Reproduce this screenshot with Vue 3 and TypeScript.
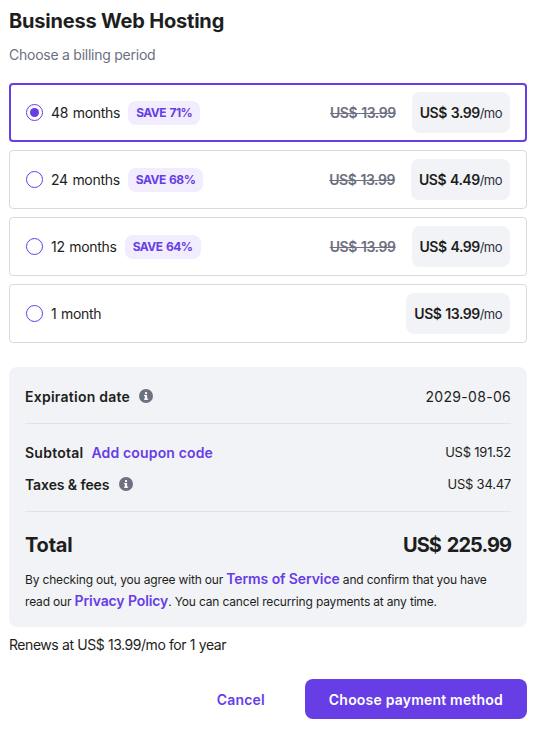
<script setup lang="ts">
interface Plan {
  label: string
  save?: string
  old?: string
  price: string
  selected?: boolean
}
const plans: Plan[] = [
  { label: '48 months', save: 'SAVE 71%', old: 'US$ 13.99', price: 'US$ 3.99', selected: true },
  { label: '24 months', save: 'SAVE 68%', old: 'US$ 13.99', price: 'US$ 4.49' },
  { label: '12 months', save: 'SAVE 64%', old: 'US$ 13.99', price: 'US$ 4.99' },
  { label: '1 month', price: 'US$ 13.99' },
]
</script>

<template>
  <div class="page">
    <h1 class="title">Business Web Hosting</h1>
    <p class="sub">Choose a billing period</p>

    <div class="plans">
      <div v-for="p in plans" :key="p.label" class="plan" :class="{ selected: p.selected }">
        <span class="radio"><span v-if="p.selected" class="dot"></span></span>
        <span class="label">{{ p.label }}</span>
        <span v-if="p.save" class="save">{{ p.save }}</span>
        <span class="spacer"></span>
        <span v-if="p.old" class="old">{{ p.old }}</span>
        <span class="price"><b>{{ p.price }}</b><span class="mo">/mo</span></span>
      </div>
    </div>

    <section class="summary">
      <div class="row first">
        <span class="strong">Expiration date
          <svg class="info" viewBox="0 0 14 14"><circle cx="7" cy="7" r="7" fill="#6d7081"/><rect x="5.9" y="6" width="2.2" height="4.6" fill="#fff"/><rect x="5" y="6" width="3" height="1.2" fill="#fff"/><rect x="5" y="9.6" width="4.2" height="1.2" fill="#fff"/><circle cx="7" cy="4.1" r="1.2" fill="#fff"/></svg>
        </span>
        <span class="date">2029-08-06</span>
      </div>
      <hr class="rule" />
      <div class="row sub-row">
        <span class="strong">Subtotal<a class="coupon">Add coupon code</a></span>
        <span class="amount">US$ 191.52</span>
      </div>
      <div class="row tax-row">
        <span class="strong taxes">Taxes &amp; fees
          <svg class="info" viewBox="0 0 14 14"><circle cx="7" cy="7" r="7" fill="#6d7081"/><rect x="5.9" y="6" width="2.2" height="4.6" fill="#fff"/><rect x="5" y="6" width="3" height="1.2" fill="#fff"/><rect x="5" y="9.6" width="4.2" height="1.2" fill="#fff"/><circle cx="7" cy="4.1" r="1.2" fill="#fff"/></svg>
        </span>
        <span class="amount">US$ 34.47</span>
      </div>
      <hr class="rule" />
      <div class="row total">
        <span>Total</span>
        <span class="grand">US$ 225.99</span>
      </div>
      <p class="legal">
        <span class="line">By checking out, you agree with our <a>Terms of Service</a> and confirm that you have</span>
        <span class="line">read our <a>Privacy Policy</a>. You can cancel recurring payments at any time.</span>
      </p>
    </section>

    <p class="renew">Renews at US$ 13.99/mo for 1 year</p>

    <div class="actions">
      <button class="cancel">Cancel</button>
      <button class="primary">Choose payment method</button>
    </div>
  </div>
</template>

<style>
html, body { margin: 0; background: #fff; }
</style>

<style scoped>
.page {
  box-sizing: border-box;
  width: 552px;
  height: 744px;
  overflow: hidden;
  padding: 8px 25px 0 9px;
  font-family: Inter, sans-serif;
  color: #1d1e20;
}
.title { margin: 0; font: 700 20px/26px Inter, sans-serif; letter-spacing: -0.2px; }
.sub { margin: 9px 0 0; font-size: 14px; line-height: 24px; color: #6d7081; letter-spacing: -0.25px; }
.plans { display: flex; flex-direction: column; gap: 8px; margin-top: 16px; }
.plan {
  box-sizing: border-box;
  height: 59px;
  display: flex;
  align-items: center;
  padding: 0 16px;
  border: 1px solid #d8dae0;
  border-radius: 4px;
}
.plan.selected { border: 2px solid #673de6; padding: 0 15px; }
.radio {
  box-sizing: border-box;
  width: 17px;
  height: 17px;
  border: 1px solid #673de6;
  border-radius: 50%;
  display: flex;
  align-items: center;
  justify-content: center;
  flex: none;
}
.dot { width: 9px; height: 9px; border-radius: 50%; background: #673de6; }
.label { margin-left: 8px; font-size: 14px; letter-spacing: -0.3px; word-spacing: 1px; }
.save {
  margin-left: 8px;
  padding: 0 8px;
  height: 24px;
  display: flex;
  align-items: center;
  border-radius: 8px;
  background: #f1edff;
  color: #673de6;
  font: 700 12px Inter, sans-serif;
  letter-spacing: -0.5px;
  word-spacing: 1px;
}
.spacer { flex: 1; }
.old {
  margin-right: 16px;
  font: 600 14px Inter, sans-serif;
  letter-spacing: -0.45px;
  word-spacing: 1px;
  color: #6d7081;
  text-decoration: line-through;
}
.price {
  height: 41px;
  box-sizing: border-box;
  padding: 0 8px;
  display: flex;
  align-items: center;
  border-radius: 8px;
  background: #f2f3f6;
  font: 600 14px Inter, sans-serif;
}
.price b { font-weight: 600; letter-spacing: -0.5px; word-spacing: 1px; }
.mo { font-weight: 400; font-size: 13px; letter-spacing: -0.5px; color: #2d2f3a; }
.summary {
  box-sizing: border-box;
  margin-top: 24px;
  height: 260px;
  padding: 17px 16px 0;
  border-radius: 8px;
  background: #f2f3f6;
}
.row { display: flex; justify-content: space-between; align-items: center; }
.first { height: 24px; }
.strong { display: flex; align-items: center; font: 600 14px Inter, sans-serif; letter-spacing: 0.25px; }
.taxes { letter-spacing: -0.1px; }
.info { width: 14px; height: 14px; margin-left: 9px; }
.taxes .info { margin-left: 10px; }
.date { font-size: 14px; letter-spacing: 0.3px; }
.rule { margin: 0; border: 0; border-top: 1px solid #e1e0f2; }
.first + .rule { margin-top: 15px; }
.sub-row { height: 24px; margin-top: 16px; }
.coupon { margin-left: 8px; color: #673de6; font-weight: 600; letter-spacing: 0.15px; }
.amount { font-size: 13px; letter-spacing: -0.22px; }
.tax-row { height: 24px; margin-top: 8px; }
.tax-row + .rule { margin-top: 15px; }
.total { margin-top: 17px; height: 32px; font: 700 20px/32px Inter, sans-serif; letter-spacing: -0.2px; }
.grand { letter-spacing: -0.95px; word-spacing: 2px; }
.legal { margin: 8px 0 0; font-size: 12px; line-height: 22px; letter-spacing: -0.17px; }
.line { display: block; height: 22px; white-space: nowrap; }
.legal a { color: #673de6; font: 600 14px Inter, sans-serif; letter-spacing: -0.1px; }
.renew { margin: 6px 0 0; font-size: 14px; line-height: 24px; letter-spacing: -0.45px; word-spacing: 0.2px; }
.actions { display: flex; justify-content: flex-end; margin-top: 22px; gap: 16px; }
.actions button { border: 0; height: 40px; border-radius: 8px; font: 600 14px Inter, sans-serif; letter-spacing: 0.2px; padding: 0 24px; }
.cancel { background: transparent; color: #673de6; }
.primary { background: #673de6; color: #fff; }
</style>
